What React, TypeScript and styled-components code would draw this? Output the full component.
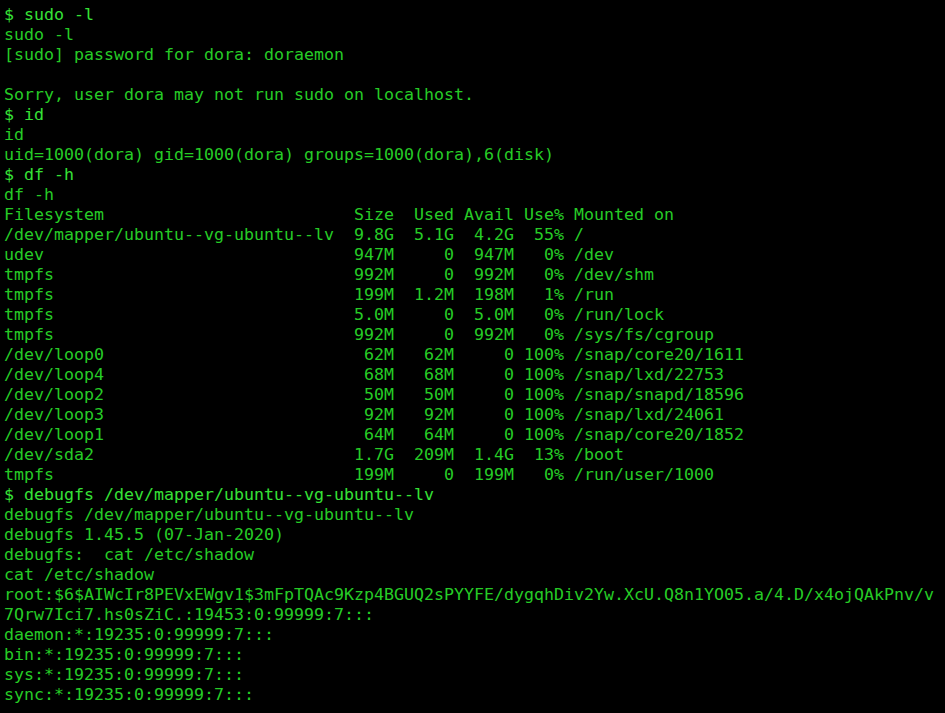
import React from "react";
import styled, { createGlobalStyle } from "styled-components";

const Global = createGlobalStyle`
  html, body { margin: 0; padding: 0; background: #000; }
  #root { min-height: 713px; background: #000; }
`;

const Terminal = styled.div`
  box-sizing: border-box;
  width: 945px;
  height: 713px;
  overflow: hidden;
  background: #000;
  padding: 5px 0 0 4px;
  display: flex;
  flex-direction: column;
  font-family: "DejaVu Sans Mono", "Liberation Mono", monospace;
  font-size: 16.61px;
  line-height: 20px;
`;

const Line = styled.div<{ $kind: "prompt" | "out" }>`
  white-space: pre;
  height: 20px;
  color: ${(p) => (p.$kind === "prompt" ? "#36e236" : "#26cc26")};
`;

type L = [string, "prompt" | "out"];

const lines: L[] = [
  ["$ sudo -l", "prompt"],
  ["sudo -l", "out"],
  ["[sudo] password for dora: doraemon", "out"],
  ["", "out"],
  ["Sorry, user dora may not run sudo on localhost.", "out"],
  ["$ id", "prompt"],
  ["id", "out"],
  ["uid=1000(dora) gid=1000(dora) groups=1000(dora),6(disk)", "out"],
  ["$ df -h", "prompt"],
  ["df -h", "out"],
  ["Filesystem                         Size  Used Avail Use% Mounted on", "out"],
  ["/dev/mapper/ubuntu--vg-ubuntu--lv  9.8G  5.1G  4.2G  55% /", "out"],
  ["udev                               947M     0  947M   0% /dev", "out"],
  ["tmpfs                              992M     0  992M   0% /dev/shm", "out"],
  ["tmpfs                              199M  1.2M  198M   1% /run", "out"],
  ["tmpfs                              5.0M     0  5.0M   0% /run/lock", "out"],
  ["tmpfs                              992M     0  992M   0% /sys/fs/cgroup", "out"],
  ["/dev/loop0                          62M   62M     0 100% /snap/core20/1611", "out"],
  ["/dev/loop4                          68M   68M     0 100% /snap/lxd/22753", "out"],
  ["/dev/loop2                          50M   50M     0 100% /snap/snapd/18596", "out"],
  ["/dev/loop3                          92M   92M     0 100% /snap/lxd/24061", "out"],
  ["/dev/loop1                          64M   64M     0 100% /snap/core20/1852", "out"],
  ["/dev/sda2                          1.7G  209M  1.4G  13% /boot", "out"],
  ["tmpfs                              199M     0  199M   0% /run/user/1000", "out"],
  ["$ debugfs /dev/mapper/ubuntu--vg-ubuntu--lv", "prompt"],
  ["debugfs /dev/mapper/ubuntu--vg-ubuntu--lv", "out"],
  ["debugfs 1.45.5 (07-Jan-2020)", "out"],
  ["debugfs:  cat /etc/shadow", "out"],
  ["cat /etc/shadow", "out"],
  ["root:$6$AIWcIr8PEVxEWgv1$3mFpTQAc9Kzp4BGUQ2sPYYFE/dygqhDiv2Yw.XcU.Q8n1YO05.a/4.D/x4ojQAkPnv/v", "out"],
  ["7Qrw7Ici7.hs0sZiC.:19453:0:99999:7:::", "out"],
  ["daemon:*:19235:0:99999:7:::", "out"],
  ["bin:*:19235:0:99999:7:::", "out"],
  ["sys:*:19235:0:99999:7:::", "out"],
  ["sync:*:19235:0:99999:7:::", "out"],
];

export default function App() {
  return (
    <>
      <Global />
      <Terminal>
        {lines.map(([text, kind], i) => (
          <Line key={i} $kind={kind}>
            {text}
          </Line>
        ))}
      </Terminal>
    </>
  );
}
